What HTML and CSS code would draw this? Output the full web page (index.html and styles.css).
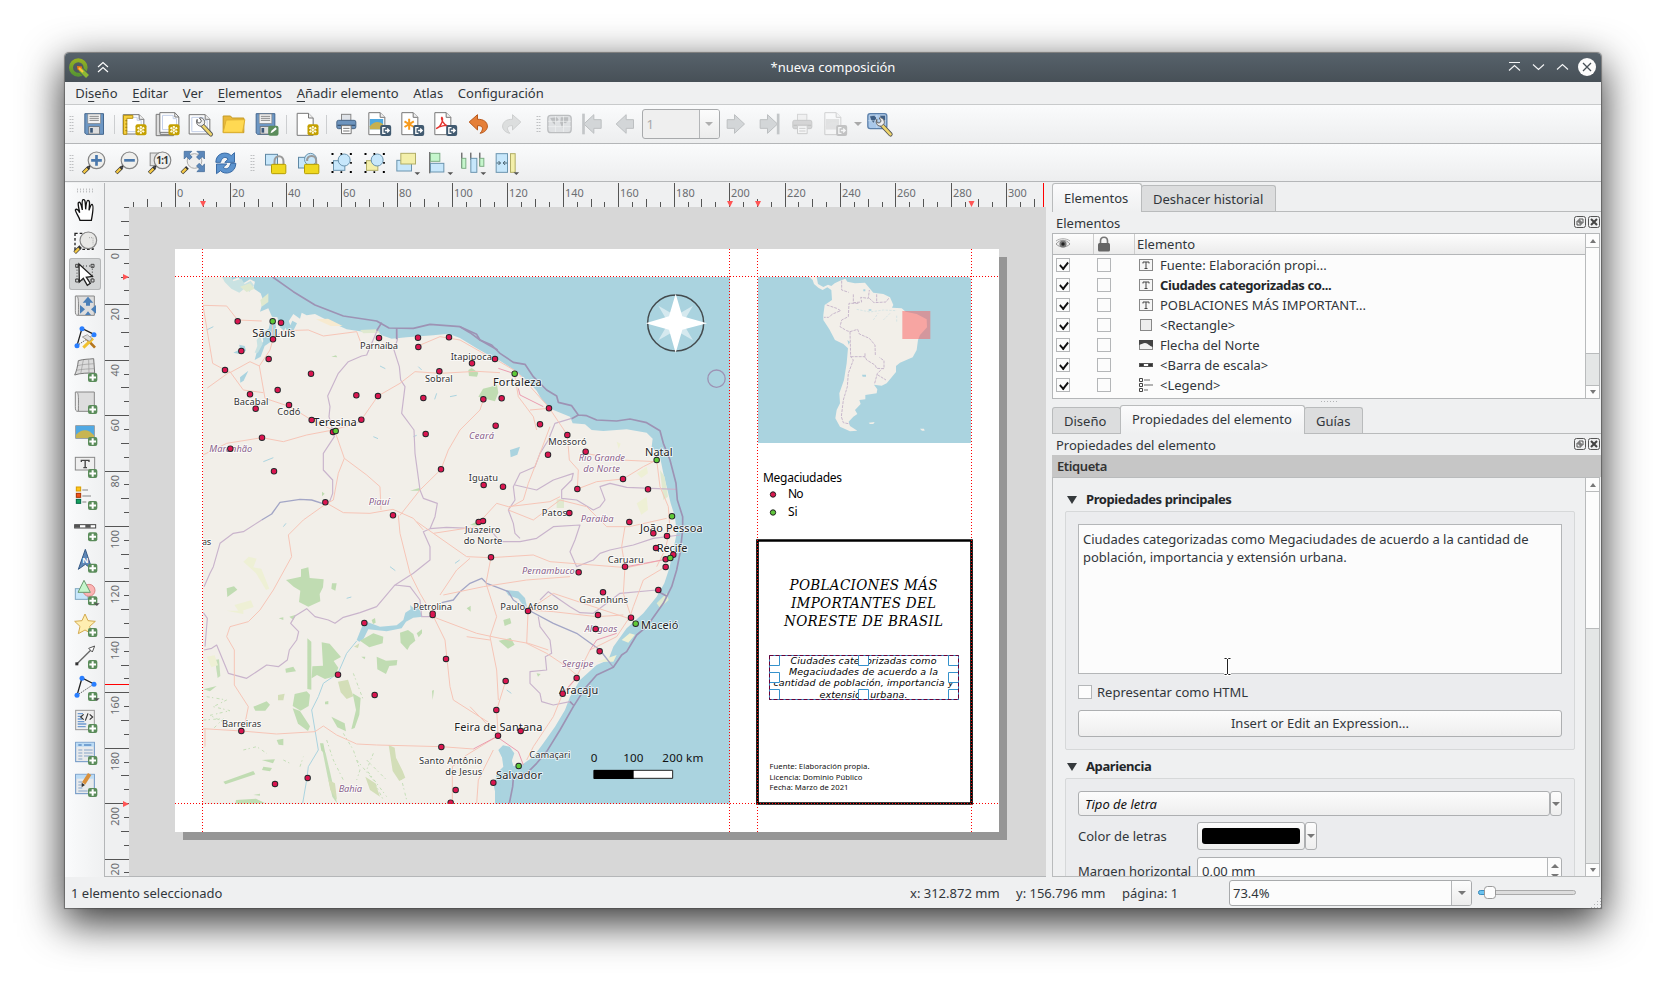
FILE: index.html
```html
<!DOCTYPE html>
<html lang="es">
<head>
<meta charset="utf-8">
<title>*nueva composición</title>
<link rel="stylesheet" href="styles.css">
</head>
<body>
<svg class="defs" width="0" height="0">
<defs>
<g id="b-new"><rect x="51" y="49" width="33" height="33" rx="6" fill="#c4a000"/><path d="M67 54v23M57 59l20 13M57 72l20-13" stroke="#fffbe0" stroke-width="6"/><circle cx="67" cy="65.500" r="5" fill="#fffbe0" stroke="#c4a000" stroke-width="2"/></g>
<g id="b-exp"><rect x="50" y="51" width="33" height="33" rx="6" fill="#415a70"/><path d="M66 59h-8v17h8M64 67.500h12m-5-6 6 6-6 6" fill="none" stroke="#fff" stroke-width="4"/></g>
<g id="b-add"><rect x="57" y="57" width="28" height="27" rx="6" fill="#5a8c5a"/><path d="M71 61v19M61 70.500h20" stroke="#fff" stroke-width="6"/></g>
<g id="arr"><path d="M75 76h17l-8.500 8z" fill="#555"/></g>
<g id="page"><path d="M20 16h34l14 14v52H20z" fill="#fff" stroke="#777" stroke-width="3"/><path d="M54 16v14h14" fill="#eee" stroke="#777" stroke-width="3"/></g>
<g id="wpage"><path d="M14 20h48l14 14v44H14z" fill="#fff" stroke="#777" stroke-width="3"/><path d="M62 20v14h14" fill="#eee" stroke="#777" stroke-width="3"/><path d="M22 28h34v9h12v34H22z" fill="#fff" stroke="#c3cfe8" stroke-width="3"/></g>
<g id="wrench"><path d="m50 48 27 29" stroke="#555" stroke-width="13" stroke-linecap="round"/><path d="m51 49 26 28" stroke="#edd46c" stroke-width="8" stroke-linecap="round"/><path d="M36 32c-6 14 4 22 14 20l8-7c3-10-6-20-15-17l6 9-5 6-8-1z" fill="#eee" stroke="#666" stroke-width="3"/></g>
<g id="floppy"><path d="M19 17h56v62H23l-4-4z" fill="#6d97c4" stroke="#45688f" stroke-width="3"/><rect x="28" y="18" width="38" height="28" fill="#f3f3f3" stroke="#888" stroke-width="2"/><path d="M33 25h28M33 31h28M33 37h28" stroke="#888" stroke-width="3"/><rect x="31" y="56" width="32" height="22" fill="#ddd" stroke="#666" stroke-width="2"/><rect x="35" y="60" width="8" height="14" fill="#3c5878"/></g>
<g id="glass"><path d="M17 78 34 61" stroke="#333" stroke-width="11"/><path d="m18 77 12-12" stroke="#f3c846" stroke-width="7"/><path d="m34 61 8-9" stroke="#222" stroke-width="7"/><circle cx="57" cy="40" r="25" fill="#efefed" stroke="#858585" stroke-width="3.500"/></g>
<g id="printer"><rect x="33" y="19" width="28" height="20" fill="#dfe3e8" stroke="#888" stroke-width="3"/><rect x="19" y="37" width="57" height="25" rx="5" fill="#6d94be" stroke="#496788" stroke-width="3"/><path d="M21 52h53" stroke="#3c5878" stroke-width="4"/><path d="M33 53h29v24H33z" fill="#fff" stroke="#777" stroke-width="3"/><path d="M38 61h19M38 69h19" stroke="#777" stroke-width="3"/></g>
<g id="corners" fill="#000"><path d="M18 18h6v6h-6zM45 18h5v5h-5zM73 18h6v6h-6zM18 45h5v5h-5zM18 72h6v6h-6zM45 73h5v5h-5zM73 72h6v6h-6zM74 45h5v5h-5z"/></g>
<g id="back"><path d="M18 48 48 20v15h22v26H48v15z" fill="#d3d6d8" stroke="#bcbfc1" stroke-width="3"/></g>
<g id="scroll"><path d="M22 18h54v58H28z" fill="#ddd" stroke="#888" stroke-width="3"/><path d="M19 18c10 0 10 6 9 58-8 1-9-4-9-14z" fill="#eee" stroke="#888" stroke-width="3"/></g>
<g id="tri"><path d="M24 76 39 24 75 42" fill="none" stroke="#222" stroke-width="4"/><path d="m24 76 51-34" stroke="#222" stroke-width="3" stroke-dasharray="3 4"/><circle cx="24" cy="76" r="7.500" fill="#2a7fff"/><circle cx="39" cy="25" r="7.500" fill="#2a7fff"/><circle cx="75" cy="43" r="7.500" fill="#2a7fff"/></g>
<g id="dockbtns"><g fill="none" stroke="#555"><rect x=".5" y=".5" width="11" height="11" rx="2"/><path d="M5 3h4v4H5zM3 5h4v4H3z"/><rect x="14.500" y=".5" width="11" height="11" rx="2"/></g><path d="m17 3 6 6m0-6-6 6" stroke="#444" stroke-width="2"/></g>
<g id="ti"><rect x=".5" y="1.500" width="13" height="11" fill="#f6f6f6" stroke="#888"/><path d="M4 5.500V4h6v1.500M7 4v6M5.500 10.500h3" fill="none" stroke="#444"/></g>
</defs>
</svg>

<div class="window">
  <header class="titlebar">
    <svg class="logo" viewBox="0 0 20 20"><defs><linearGradient id="q" x1="0" x2="0" y1="0" y2="1"><stop offset="0" stop-color="#93b023"/><stop offset="1" stop-color="#589632"/></linearGradient></defs><circle cx="9.300" cy="9.500" r="7.300" fill="none" stroke="url(#q)" stroke-width="4"/><path d="m11.500 11.500 7 7" stroke="#4b5761" stroke-width="6"/><path d="m11 11 7.500 7.500" stroke="#8fb833" stroke-width="4"/><path d="m8 8 5 .5-.5 5-4-2z" fill="#ee7913"/><path d="m10 10 4 4" stroke="#f8c83c" stroke-width="2"/></svg>
    <svg class="shade" viewBox="0 0 12 12"><path d="M1 6l5-4.500L11 6M1 11l5-4.500L11 11" fill="none" stroke="#fff" stroke-width="1.100"/></svg>
    <span class="caption">*nueva composición</span>
    <svg class="winbtns" viewBox="0 0 90 20"><g fill="none" stroke="#f4f5f6" stroke-width="1.100"><path d="M1 5.500h11M1 13.500l5.500-5 5.500 5M25 7.500l5.500 5 5.500-5M49 12.500l5.500-5 5.500 5"/></g><circle cx="79" cy="10" r="9" fill="#fcfcfc"/><path d="m75 6 8 8m0-8-8 8" stroke="#475057" stroke-width="1.300"/></svg>
  </header>

  <nav class="menu"><span>Di<u>s</u>eño</span><span><u>E</u>ditar</span><span><u>V</u>er</span><span><u>E</u>lementos</span><span><u>A</u>ñadir elemento</span><span>Atlas</span><span>Configuración</span></nav>

  <div class="toolbar bar1">
    <i class="grip"></i>
    <svg viewBox="0 0 96 96"><use href="#floppy"/></svg><i class="sep"></i>
    <svg viewBox="0 0 96 96"><use href="#wpage"/><path d="M15 22h28v9H25v48H15z" fill="#f6cf3f" stroke="#b7920f" stroke-width="3"/><path d="M20 38h6M20 48h6M20 58h6M20 68h6" stroke="#8a6c00" stroke-width="2"/><use href="#b-new"/></svg>
    <svg viewBox="0 0 96 96"><path d="M14 19h12v60h40v4H14z" fill="#ddd" stroke="#777" stroke-width="3"/><path d="M25 14h45l12 13v46H25z" fill="#fff" stroke="#777" stroke-width="3"/><path d="M33 22h32v10h10v33H33z" fill="none" stroke="#c3cfe8" stroke-width="3"/><path d="M70 14v13h12" fill="none" stroke="#777" stroke-width="3"/><use href="#b-new"/></svg>
    <svg viewBox="0 0 96 96"><use href="#wpage"/><use href="#wrench" x="2" y="2"/></svg>
    <svg viewBox="0 0 96 96"><path d="M17 24h22l5 6h35v44H17z" fill="#e9b83a" stroke="#c49a25" stroke-width="3"/><path d="m26 36 56-1-7 38H17z" fill="#ffd952" stroke="#dfb233" stroke-width="3"/></svg>
    <svg viewBox="0 0 96 96"><use href="#floppy" x="-2"/><rect x="53" y="53" width="31" height="30" rx="6" fill="#5a8c5a"/><path d="m60 76 3-8 12-10 4 5-12 10z" fill="#fff"/></svg><i class="sep"></i>
    <svg viewBox="0 0 96 96"><use href="#page"/><use href="#b-new"/></svg><i class="sep"></i>
    <svg viewBox="0 0 96 96"><use href="#printer"/></svg>
    <svg viewBox="0 0 96 96"><use href="#page" x="-4" y="-2"/><rect x="19" y="33" width="40" height="31" fill="#4ea8e0"/><path d="M19 55c14-16 26-16 40-6v15H19z" fill="#c5b050"/><use href="#b-exp"/></svg>
    <svg viewBox="0 0 96 96"><use href="#page" x="-4" y="-2"/><path d="M38 32v33M24 40l28 17M24 57l28-17" stroke="#f79b1d" stroke-width="6"/><use href="#b-exp"/></svg>
    <svg viewBox="0 0 96 96"><use href="#page" x="-4" y="-2"/><path d="M20 62c18-8 22-30 17-34-5 2 8 28 20 26-8-4-26 0-37 8z" fill="none" stroke="#e3342f" stroke-width="4"/><use href="#b-exp"/></svg>
    <svg viewBox="0 0 96 96"><path d="M20 42 45 20v14c36-2 40 36 8 42 12-14 8-24-8-23v13z" fill="#e57f38" stroke="#b9581b" stroke-width="3"/></svg>
    <svg viewBox="0 0 96 96" opacity=".75"><path d="M76 42 51 20v14c-36-2-40 36-8 42-12-14-8-24 8-23v13z" fill="#d5d7d7" stroke="#c0c2c2" stroke-width="3"/></svg>
    <i class="grip g2"></i>
    <svg viewBox="0 0 96 96"><rect x="13" y="22" width="70" height="52" rx="9" fill="#dfe1e3" stroke="#bcbec0" stroke-width="4"/><path d="m20 30 20-2 6 8-10 6 2 12-10-10zM52 28h22v12l-8 6-6-2-4 16-6-16z" fill="#bcbec0"/><path d="M14 40h68M14 56h68M36 24v48M60 24v48" stroke="#f0f1f2" stroke-width="2"/></svg>
    <svg viewBox="0 0 96 96"><use href="#back" x="4"/><path d="M21 17v62" stroke="#c3c6c8" stroke-width="8"/></svg>
    <svg viewBox="0 0 96 96"><use href="#back" x="2"/></svg>
    <div class="combo pagebox"><span>1</span><b></b></div>
    <svg viewBox="0 0 96 96"><use href="#back" transform="matrix(-1 0 0 1 90 0)"/></svg>
    <svg viewBox="0 0 96 96"><use href="#back" transform="matrix(-1 0 0 1 90 0)"/><path d="M74 17v62" stroke="#c3c6c8" stroke-width="8"/></svg>
    <svg viewBox="0 0 96 96" class="off"><use href="#printer"/></svg>
    <svg viewBox="0 0 96 96" class="off"><use href="#page" x="-4" y="-2"/><rect x="19" y="33" width="40" height="31" fill="#9bc"/><path d="M19 55c14-16 26-16 40-6v15H19z" fill="#bbb"/><use href="#b-exp"/></svg>
    <i class="dd"></i>
    <svg viewBox="0 0 96 96"><rect x="13" y="17" width="57" height="45" rx="7" fill="#a9c8ea" stroke="#5c80aa" stroke-width="4"/><path d="m18 24 14-2 8 8-10 16-8-10zM48 22h18v16l-10 4zM40 20v40M14 38h54" fill="#3f5f85" stroke="#dbe8f6" stroke-width="1.500"/><use href="#wrench" x="4" y="2"/></svg>
  </div>

  <div class="toolbar bar2">
    <i class="grip"></i>
    <svg viewBox="0 0 96 96"><use href="#glass"/><path d="M57 24v32M41 40h32" stroke="#4a78ac" stroke-width="8"/></svg>
    <svg viewBox="0 0 96 96"><use href="#glass"/><path d="M41 40h32" stroke="#4a78ac" stroke-width="8"/></svg>
    <svg viewBox="0 0 96 96"><rect x="20" y="18" width="28" height="38" fill="#e4e4e4" stroke="#888" stroke-width="3"/><use href="#glass"/><text x="56" y="51" class="one">1:1</text></svg>
    <svg viewBox="0 0 96 96"><path d="M16 78 33 61" stroke="#333" stroke-width="11"/><path d="m17 77 12-12" stroke="#f3c846" stroke-width="7"/><circle cx="54" cy="42" r="22" fill="#eee" stroke="#aaa" stroke-width="3"/><g fill="#5b87ba" stroke="#3d6593" stroke-width="2"><path d="M23 13h23l-8 8 9 9-8 8-9-9-7 7zM84 13H61l8 8-9 9 8 8 9-9 7 7zM84 74H61l8-8-9-9 8-8 9 9 7-7z"/></g></svg>
    <svg viewBox="0 0 96 96"><path d="M19 46c0-30 34-34 46-20l10-9v29H46l10-10c-9-9-19-5-23 10z" fill="#5c93ce" stroke="#3a6ba5" stroke-width="3"/><path d="M79 49c0 30-34 36-46 22l-12 9V51h31L41 61c9 9 19 3 23-12z" fill="#5c93ce" stroke="#3a6ba5" stroke-width="3"/></svg>
    <i class="grip g3"></i>
    <svg viewBox="0 0 96 96"><rect x="18" y="22" width="36" height="32" fill="#c7e7fb" stroke="#5f88a4" stroke-width="3"/><path d="M45 56V44c0-22 27-22 27 0v12" fill="none" stroke="#9a9a9a" stroke-width="6"/><rect x="36" y="52" width="43" height="28" rx="3" fill="#efd81f" stroke="#b59d00" stroke-width="3"/></svg>
    <svg viewBox="0 0 96 96"><rect x="18" y="31" width="36" height="32" fill="#c7e7fb" stroke="#5f88a4" stroke-width="3"/><circle cx="54" cy="37" r="18" fill="#c7e7fb" stroke="#6b94ae" stroke-width="3"/><path d="M44 42c-2-20 26-20 27-2v12" fill="none" stroke="#9a9a9a" stroke-width="6"/><rect x="36" y="52" width="43" height="28" rx="3" fill="#efd81f" stroke="#b59d00" stroke-width="3"/></svg>
    <svg viewBox="0 0 96 96"><rect x="24" y="41" width="34" height="29" fill="#c7e7fb" stroke="#6b94ae" stroke-width="3"/><circle cx="56" cy="39" r="18" fill="#c7e7fb" stroke="#6b94ae" stroke-width="3"/><use href="#corners"/></svg>
    <svg viewBox="0 0 96 96"><rect x="24" y="41" width="34" height="29" fill="#f3efaa" stroke="#b1ad66" stroke-width="3"/><circle cx="56" cy="39" r="18" fill="#c7e7fb" stroke="#6b94ae" stroke-width="3"/><use href="#corners"/></svg>
    <svg viewBox="0 0 96 96"><rect x="16" y="40" width="44" height="32" fill="#c7e7fb" stroke="#6b94ae" stroke-width="3"/><rect x="28" y="19" width="44" height="32" fill="#f3efaa" stroke="#b1ad66" stroke-width="3"/><use href="#arr" x="-6"/></svg>
    <svg viewBox="0 0 96 96"><path d="M16 15v64" stroke="#333" stroke-width="3"/><rect x="18" y="19" width="28" height="24" fill="#c5f6cc" stroke="#7fae86" stroke-width="3"/><rect x="18" y="49" width="40" height="26" fill="#c7e7fb" stroke="#6b94ae" stroke-width="3"/><use href="#arr" x="-6"/></svg>
    <svg viewBox="0 0 96 96"><path d="M13 17v46M40 17v22M67 17v40" stroke="#333" stroke-width="3"/><rect x="13" y="34" width="12" height="30" fill="#c5f6cc" stroke="#7fae86" stroke-width="3"/><rect x="40" y="34" width="18" height="42" fill="#c7e7fb" stroke="#6b94ae" stroke-width="3"/><rect x="67" y="34" width="12" height="24" fill="#c5f6cc" stroke="#7fae86" stroke-width="3"/><use href="#arr" x="-6"/></svg>
    <svg viewBox="0 0 96 96"><rect x="17" y="20" width="34" height="56" fill="#c7e7fb" stroke="#6b94ae" stroke-width="3"/><path d="M18 48h12m-6-6 6 6-6 6M50 48H38m6-6-6 6 6 6" fill="none" stroke="#46606f" stroke-width="3"/><rect x="60" y="20" width="14" height="56" fill="#f3efaa" stroke="#b1ad66" stroke-width="3"/><use href="#arr" x="-6"/></svg>
  </div>

  <main class="body">
    <aside class="tools">
      <i class="hgrip"></i>
      <svg viewBox="0 0 96 96"><path d="M33 79c-3-12-12-20-14-31 4-6 10 1 13 8-2-13-6-25-4-30 5-4 8 1 12 22-1-15-2-29 2-31 6-2 7 4 8 29 1-14 3-27 7-27 6 0 5 10 3 30 3-10 5-18 9-18 6 2 3 22-2 48z" fill="#fff" stroke="#111" stroke-width="4"/></svg>
      <svg viewBox="0 0 96 96"><rect x="18" y="22" width="54" height="48" fill="none" stroke="#222" stroke-width="4" stroke-dasharray="8 6"/><path d="M17 80 35 62" stroke="#333" stroke-width="11"/><path d="m18 79 12-12" stroke="#f3c846" stroke-width="7"/><circle cx="58" cy="43" r="25" fill="#e8e8e6" stroke="#858585" stroke-width="3.500"/><path d="M60 35h12v20" fill="none" stroke="#aaa" stroke-width="3" stroke-dasharray="3 3"/></svg>
      <svg class="on" viewBox="0 0 96 96"><rect x="24" y="24" width="46" height="42" fill="none" stroke="#222" stroke-width="2.500" stroke-dasharray="3 6"/><path d="M20 19h9v9h-9zM66 19h9v9h-9zM20 63h9v9h-9zM66 63h9v9h-9z" fill="none" stroke="#444" stroke-width="3"/><path d="m30 18 1 54 12-11 12 21 9-6-12-18 18-3z" fill="#fff" stroke="#222" stroke-width="4"/></svg>
      <svg viewBox="0 0 96 96"><use href="#scroll"/><g fill="#4a7fb8"><path d="M57 20 73 38H63v9H51v-9H41zM33 45l15 13-15 13zM81 45 66 58l15 13zM48 75h18L57 64z"/></g></svg>
      <svg viewBox="0 0 96 96"><use href="#tri" y="-5"/><path d="m46 43 32 34" stroke="#b5761d" stroke-width="8"/><path d="M43 77 72 49" stroke="#f1c232" stroke-width="9"/><path d="M40 45 55 38l14 12-8 8z" fill="#ddd" stroke="#888" stroke-width="2"/></svg>
      <svg viewBox="0 0 96 96"><path d="M28 20c16-5 30-4 46-6l3 43c-20 0-44 0-60 6 5-10 9-26 11-43z" fill="#dcdcdc" stroke="#777" stroke-width="3"/><path d="M26 35c18-5 32-4 50-6M22 49c18-4 36-4 54-5M43 18l-8 42M59 17l1 40" stroke="#999" stroke-width="2" fill="none"/><use href="#b-add"/></svg>
      <svg viewBox="0 0 96 96"><use href="#scroll"/><use href="#b-add"/></svg>
      <svg viewBox="0 0 96 96"><rect x="20" y="23" width="56" height="38" fill="#51a9e3" stroke="#888" stroke-width="2"/><path d="M21 50c20-20 38-16 54 2v8H21z" fill="#c8b552"/><use href="#b-add"/></svg>
      <svg viewBox="0 0 96 96"><rect x="19" y="22" width="58" height="38" fill="#efefef" stroke="#888" stroke-width="3"/><path d="M37 36v-5h23v5M48.500 31v21M43 53h11" fill="none" stroke="#444" stroke-width="4"/><use href="#b-add"/></svg>
      <svg viewBox="0 0 96 96"><g stroke-width="3"><rect x="22" y="15" width="13" height="12" fill="#ffc61a" stroke="#d89b00"/><rect x="22" y="34" width="13" height="12" fill="#f1521b" stroke="#a83200"/><rect x="22" y="52" width="13" height="12" fill="#16a05d" stroke="#064"/></g><path d="M40 24h17M40 42h26M40 60h12" stroke="#aaa" stroke-width="4"/><use href="#b-add"/></svg>
      <svg viewBox="0 0 96 96"><rect x="17" y="32" width="63" height="10" fill="#fff" stroke="#444" stroke-width="3"/><path d="M17 37h16M49 37h16" stroke="#555" stroke-width="8"/><use href="#b-add" y="-2"/></svg>
      <svg viewBox="0 0 96 96"><path d="M49 10 69 70 49 55 28 70z" fill="#5f88b8" stroke="#365a85" stroke-width="3"/><text class="nn" x="49" y="50">N</text><use href="#b-add" y="-4"/></svg>
      <svg viewBox="0 0 96 96"><rect x="19" y="32" width="38" height="32" fill="#c7e7fb" stroke="#7fa7c0" stroke-width="3"/><circle cx="60" cy="37" r="18" fill="#fbb4b4" stroke="#d98686" stroke-width="3"/><path d="m45 7 19 36H27z" fill="#c5f6cc" stroke="#6a9a70" stroke-width="3"/><use href="#b-add" y="-2"/><use href="#arr"/></svg>
      <svg viewBox="0 0 96 96"><path d="m48 12 9 20 22 2-17 15 5 22-19-11-20 11 5-22-16-15 22-2z" fill="#ffeeb0" stroke="#d3aa50" stroke-width="3"/><use href="#b-add" y="-3"/></svg>
      <svg viewBox="0 0 96 96"><path d="M24 65 68 22" stroke="#666" stroke-width="4"/><path d="m77 12-18 7 11 11z" fill="#fff" stroke="#555" stroke-width="3"/><path d="M19 61h9v9h-9z" fill="#333"/><use href="#b-add" y="-3"/></svg>
      <svg viewBox="0 0 96 96"><use href="#tri" y="-12"/><use href="#b-add" y="-3"/><use href="#arr" y="-3"/></svg>
      <svg viewBox="0 0 96 96"><rect x="20" y="13" width="56" height="58" fill="#efefef" stroke="#999" stroke-width="3"/><path d="M26 23h16M26 31h12M26 39h14M26 47h20M26 54h26M26 62h24" stroke="#6f9bd0" stroke-width="4"/><path d="m44 25-9 8 9 8M62 25l9 8-9 8M57 22l-8 22" fill="none" stroke="#333" stroke-width="3.500"/><use href="#b-add" y="-3"/></svg>
      <svg viewBox="0 0 96 96"><rect x="20" y="13" width="56" height="58" fill="#e8eaec" stroke="#6b94c4" stroke-width="3"/><path d="M21 20h54" stroke="#bcdcf5" stroke-width="12"/><path d="M28 21h10M45 21h22" stroke="#5c8fc8" stroke-width="4"/><path d="M28 36h12M45 36h26M28 45h12M45 45h26M28 54h12M45 54h26M28 63h12" stroke="#87a5c8" stroke-width="3"/><use href="#b-add" y="-3"/></svg>
      <svg viewBox="0 0 96 96"><rect x="20" y="13" width="56" height="58" fill="#e8eaec" stroke="#6b94c4" stroke-width="3"/><path d="M21 20h54" stroke="#bcdcf5" stroke-width="12"/><path d="M28 36h12M28 45h12M28 54h12M28 63h28" stroke="#87a5c8" stroke-width="3"/><path d="M62 12 44 40" stroke="#d9903b" stroke-width="12"/><path d="m38 38 10 7-10 7z" fill="#333"/><use href="#b-add" y="-3"/></svg>
    </aside>

    <section class="view">
      <svg class="hruler" viewBox="105 183 941 24"><path id="hticks"/><g id="hlabels"></g><path class="mark" d="M200 201h6l-3 6zM727 201h6l-3 6zM755 201h6l-3 6zM968.500 201h6l-3 6z"/><path class="cur" d="M1043.500 183v24"/></svg>
      <div class="viewrow">
        <svg class="vruler" viewBox="105 207 24 669"><path id="vticks"/><g id="vlabels"></g><path class="mark" d="M123 274v6l6-3zM123 801v6l6-3z"/><path class="cur" d="M105 684.500h24"/></svg>
        <svg class="canvas" viewBox="129 207 917 669">
          <defs>
            <clipPath id="cm"><rect x="9" y="111" width="1581" height="1580"/></clipPath>
            <clipPath id="ci"><rect x="54" y="111" width="639" height="498"/></clipPath>
          </defs>
          <path fill="#969696" d="M183 257h824v583H183z"/><path fill="#fff" d="M175 249h824v583H175z"/>
          <g transform="translate(200 240) scale(.33333)"><g clip-path="url(#cm)">
            <path fill="#aad3df" d="M0 100h1600v1600H0z"/>
            <path fill="#f2efe9" d="M0 100L80 105 92 122 115 112 130 130 150 118 165 125 160 145 182 160 190 182 180 215 205 205 216 230 232 232 240 262 252 272 262 250 280 222 300 236 305 218 320 226 345 222 400 250 440 268 500 277 530 274 545 286 575 296 620 292 700 286 745 281 780 294 830 325 860 342 900 362 950 395 990 430 1010 452 1026 480 1055 508 1110 530 1118 550 1155 553 1175 570 1210 573 1280 568 1340 578 1358 596 1355 620 1380 650 1390 700 1400 740 1412 790 1425 830 1430 880 1420 930 1408 985 1393 1030 1370 1070 1330 1120 1280 1165 1240 1220 1225 1260 1190 1275 1140 1320 1110 1370 1095 1410 1065 1460 1030 1510 1000 1550 965 1575 940 1578 932 1550 918 1520 905 1545 910 1580 890 1600 882 1640 895 1700H0z"/>
            <g fill="#aad3df"><path d="M212 240l14 8 4 26-10 26-26 18-12 32-18 10 8-30 18-26-4-24 20-14zM120 412l25-20-14 30-10 6zM100 338l20-10-2-14 16 4 4 14-20 10zM470 1200L490 1150 500 1145 540 1160 590 1156 610 1140 616 1118 632 1108 630 1095 645 1108 655 1102 668 1130 640 1133 618 1145 605 1165 560 1174 505 1168 490 1198 478 1205zM255 262l10-22 6 16 6-14 14 8-10 20-16 8zM905 1550l-10-20 14-14 20 4 14 20-10 30-14-8zM885 1640l16-6 0 60-16 0zM930 630l30-10-8 24-20 8zM915 1050l40 4 20 20 6 26-10-2-16-22-30-10z"/></g>
            <path fill="#c9e2e2" d="M60 100l30 4 10 20 24-8 10 16 18-10 10 14-14 20-10-14-20 16-24-12-20-20zM170 300l10-12 8 24-14 26-10 0 8-20z"/>
            <path fill="none" stroke="#aad3df" stroke-width="3" d="M470 1203L440 1240 414 1300 370 1330 355 1370 335 1410 345 1470 355 1530 325 1580 320 1620 308 1690M20 270l20-10M710 460l-6 18M750 470l20-4M520 590l14 6M190 665l30-12M250 860l8-10M570 980l16 12M920 1350l14 10M655 380l10 10M540 378l16 8M60 620l30 4M640 590l10-4M765 970l14-10M440 1075l14-4M1020 470l10-10"/>
            <g fill="#c0dcb2"><path d="M258 1020l45-10 0-22 22-6 4 32 42 4-2 24-10 20 2 22-36 16-28-14 4-34-20-12zM80 1045l22-6 10 10-30 22zM396 1030l14 0-4 22-12-6zM365 1207l24 4 34 40-22 12 14 20-10 26-30 8-24-12-16 10 2-36 32-2zM322 1195l12 10 0 144-12-2zM480 1202l40-22 30 10-2 20-40 12zM600 1178l24-8 16 12 6 20-16 14-8 14-20-22zM530 1250l28 12 34-2-2 16-22 2-10 24-26-14zM284 1362l36-8 10 10-4 34-24 14-24-14zM278 1405l22 8 30 46-6 14-30-22zM256 1286l24-6 8 14-30 4zM160 1400l40-16 10 10-14 18-30 0zM394 1430l40 20 4 24-26-12zM454 1468l14-58-10-50 24 14-4 50-14 40zM70 1625l90-32 6 10-90 30zM108 1680l60-4 28 14-90 4zM185 1560l40-2-6 12zM190 1580l26 4-6 10-24-4zM10 1348l40-10-20 16zM268 1130l20-6-8 16zM236 1135l14-3 0 8zM375 1385l10-2 0 10-10 0zM484 1250l12 0-2 8zM696 1352l6-2-4 30zM805 390l10-6 20 14-4 12-24-2zM835 470l14-24 24-6 18-6 4 24-10 26-30-8zM630 752l28-8 4 8zM810 855l24-12 0 14zM910 1140l20-6 4 16-20 8zM896 1202l36-8 12 20-20 12zM1010 1300l12 2-8 8zM800 1105l12-8 0 18zM230 1500l20-4 0 20-14-2zM360 1510l10 0 6 30-12-8zM515 1140l10-6 2 14-8 4zM650 1180l16-12 0 12-10 12zM366 755l8 6-8 8zM394 350l14-4 4 6z"/><path d="M365 1520l12 20 14 60 20 90-14-20-14-60zM45 1260l12-2 4 50-8 6zM160 1665l20-4 0 6z" opacity=".9"/></g>
            <path fill="none" stroke="#c5deb8" stroke-width="3" stroke-dasharray="9 7 4 10" d="M20 1370l60 10-40 20 50 12-60 14 40 20M10 1440l60-4-30 30M430 1480l30 50 20 60-10 30M470 1560l50 60 30 60M380 1500l20 60 30 60M500 1560l60 60M130 1530l40-10 30 20M300 1580l10-30M460 1300l30 80M600 1600l20 80M250 1560l20 10M520 1540l-20 50 60 80"/>
            <g fill="#d3deb8"><path d="M414 1325l30-6 16 50-20 8-18-20zM234 1365l20-4-4 20-16 0zM566 1515l18 8 4 30 20 40 8 20-18 10-20-30zM385 1620l20 10 6 50-20-30zM462 1220l16-10-4 14zM496 1610l30 20 14 40-30-20z"/></g>
            <g fill="#eef0d5"><path d="M130 965l16-15 24 6-10 26 24 4 24 60-10 4-30-50zM103 1095l50-14 8 20-44 14zM80 1112l50 0 0 10zM20 1250l24-4 10 30-20 6zM1250 605l12 6-6 16zM1310 700l30-20 4 20-20 14zM1310 790l30-20 4 40-20 14zM1190 1265l60-20-10 20zM1265 1200l24-20 16 4-20 24z"/></g>
            <path fill="#f7ead0" d="M348 238l36-2 44 22-36 0z"/><path fill="#dfe9cf" d="M205 160l-24 20 4 20 20-14zM120 140l30-10 14 16-24 10zM480 270l50-2 10 10-50 2zM1070 778h22v26h-22zM1370 1090l30-30 6 20-26 24zM1380 690l14 20 10 60-14 10z"/>
            <g fill="none" stroke="#c9b4cc" stroke-width="3.500" stroke-linejoin="round"><path d="M545 248L530 275 500 345 485 348 445 365 415 400 383 468 390 500 387 530 403 590 370 640 370 690 398 720 398 760 390 782 376 793M185 840L130 875 100 880 60 910 40 980 30 1000 12 1040M590 264L592 300 582 330 598 380 602 420 615 440 605 520 642 570 645 640 660 750 670 775 712 790 705 830 690 866 670 875 690 920 690 960 640 1000 585 1035 530 1100 480 1118 430 1132 405 1150 385 1140 345 1130 320 1106 285 1128 272 1150 296 1175 290 1200 268 1230 262 1260 235 1280 200 1275 140 1315 85 1300 50 1215 35 1225 12 1230M585 1035L630 1040 660 1080 665 1130 698 1130M10 1118L22 1135 15 1220M1115 535L1065 550 1045 600 1020 640 1005 680 960 700 940 740 945 780 925 810 940 850 945 880 960 895M945 735L1010 750 1060 720 1120 700 1115 720 1085 750 1085 775 1130 780 1180 810 1200 800 1215 780 1200 740 1230 730 1280 742 1430 748M690 866L740 862 830 866 880 880 900 905 960 905 1010 895 1060 860 1140 855 1125 900 1110 935 1130 980 1180 960 1200 940 1230 930 1300 915 1360 895 1440 885M1020 1080L1045 1055 1110 1100 1140 1118 1180 1120 1220 1090 1260 1060 1370 1050 1400 1070M1015 1130L1020 1160 1050 1200 1055 1240 1036 1250 1040 1290 990 1295 990 1330 1020 1360 1025 1385 1060 1395 1110 1385 1120 1395"/></g>
            <path fill="none" stroke="#a3a6c6" stroke-width="4" stroke-linejoin="round" d="M376 793L335 780 300 778 240 787 215 822 185 840M725 1088L760 1080 780 1055 810 1030 845 1015 860 1030 900 1045 925 1055 940 1080 985 1110 1060 1150 1130 1180 1200 1230 1240 1282"/>
            <g fill="none" stroke="#f6c5b7" stroke-width="3" stroke-linejoin="round"><path d="M9 196L80 198 113 240 185 243M9 196L38 370 75 390 90 398 150 365 178 378 210 330 219 298 217 250M22 444L90 395 130 450 190 458M178 378L195 475 270 500 335 540 399 570M219 298L250 272 325 270 370 288 470 275 485 315M9 645L80 610 186 593 250 605 320 585 399 570 470 550 484 539 534 468 600 430 645 395 720 400 830 394 900 398M654 318L720 290 780 300 885 360M407 580L433 655 415 700 400 780 376 793 310 840 265 885 275 950 220 1050 180 1110 145 1145 90 1160 80 1190 103 1230 103 1335 145 1400 135 1450M433 655L500 705 540 740 543 810M376 787L430 818 510 820 579 808 640 835 670 870M600 826L660 750 723 688 745 630 780 570 840 510 850 480M595 826L600 880 630 1000 660 1060 698 1125 735 1200 750 1340 760 1380 870 1450M9 1466L124 1473 230 1482 345 1475 370 1458 410 1485 470 1512 530 1515 724 1520 820 1527M15 1466V1520M757 1690L757 1580 800 1545 890 1490M698 1130L830 1180 900 1195 985 1210 1045 1230M650 845L700 880 800 950 873 953 1000 945 1050 965 1280 983 1397 958M700 880L830 860M720 1065L770 990 810 955M730 1065L850 1040 980 1020 1110 1010M873 952L858 1030 890 1130 870 1190 890 1290 895 1380M835 850L890 790 925 800 1050 785 1080 770M925 805L970 780 985 730 1020 640 1050 560M885 357L950 395 1045 500 1102 585 1108 660 1135 690 1132 747M944 405L955 470 1000 530 1010 570M990 510L1047 505M1157 640L1260 660 1370 665M1132 747L1190 725 1269 717 1330 680 1370 660 1380 740 1405 800 1410 870 1395 930 1370 980M925 810L1000 840 1080 780 1160 800 1220 860 1288 860 1400 835M1275 860L1265 920 1275 980 1270 1060 1290 1120M1397 980L1330 1020 1300 1100 1290 1130 1250 1190 1170 1230 1130 1310 1088 1361 1060 1430 1000 1520 980 1560M984 1110L1060 1115 1190 1130 1270 1125M984 1120L980 1210 1040 1240 1100 1280 1130 1305M985 1110L1060 1060 1150 1090 1300 1140M917 1323L890 1410 894 1480M810 1400L894 1487M830 1690L835 1620 880 1530M800 1190L870 1200"/></g>
            <path fill="none" stroke="#ea9cb0" stroke-width="3" d="M820 1527L890 1490 955 1535 970 1575M1170 1230L1190 1200 1250 1180M1088 1361L1130 1314M955 445L960 465 1030 500M1280 980L1397 958M895 385L940 400"/>
            <g fill="none" stroke="#9d93b4" stroke-width="5" stroke-linejoin="round"><path d="M218 111L280 155 345 195 430 228 530 243 567 264 640 265 690 253 780 260 830 283 840 300 893 330"/><path d="M545 248L530 272M590 264v34M780 260L810 278 840 300 875 315 900 340 940 367 975 373 1000 410 1040 450 1070 468 1075 487 1115 497 1135 525 1160 527 1190 540 1250 543 1290 537 1340 548 1380 572 1390 610 1410 660 1428 730 1432 780 1448 830 1448 870 1440 940 1430 990 1415 1040 1390 1090 1340 1160 1310 1185 1280 1235 1265 1245 1240 1282 1190 1305 1155 1345 1120 1400 1080 1470 1040 1535 1010 1570 980 1600 940 1615 938 1640 928 1690M1120 1395L1110 1385M1400 1068L1365 1050M1135 525L1115 536"/><circle cx="1549.500" cy="416" r="26" stroke-width="4"/></g>
            <g class="big"><text x="157" y="290" textLength="129">São Luís</text><text x="340" y="557" textLength="130">Teresina</text><text x="879" y="438" textLength="146">Fortaleza</text><text x="1335" y="649" textLength="83">Natal</text><text x="1320" y="875" textLength="188">João Pessoa</text><text x="1370" y="937" textLength="92">Recife</text><text x="1323" y="1167" textLength="112">Maceió</text><text x="1077" y="1362" textLength="118">Aracaju</text><text x="763" y="1472" textLength="264">Feira de Santana</text><text x="888" y="1616" textLength="138">Salvador</text></g>
            <g class="mid"><text x="480" y="328" textLength="114">Parnaíba</text><text x="752" y="360" textLength="124">Itapipoca</text><text x="675" y="427" textLength="83">Sobral</text><text x="101" y="496" textLength="104">Bacabal</text><text x="232" y="524" textLength="69">Codó</text><text x="806" y="723" textLength="88">Iguatu</text><text x="1045" y="615" textLength="115">Mossoró</text><text x="1025" y="828" textLength="76">Patos</text><text x="795" y="879" textLength="106">Juazeiro</text><text x="791" y="913" textLength="116">do Norte</text><text x="1223" y="969" textLength="108">Caruaru</text><text x="1138" y="1090" textLength="146">Garanhuns</text><text x="901" y="1111" textLength="174">Paulo Afonso</text><text x="640" y="1110" textLength="116">Petrolina</text><text x="66" y="1460" textLength="118">Barreiras</text><text x="657" y="1572" textLength="190">Santo Antônio</text><text x="736" y="1605" textLength="111">de Jesus</text><text x="988" y="1553" textLength="123">Camaçari</text><text x="6" y="915" textLength="28">as</text></g>
            <g class="state"><text x="28" y="637" textLength="129">Maranhão</text><text x="506" y="796" textLength="62">Piauí</text><text x="807" y="598" textLength="75">Ceará</text><text x="1136" y="662" textLength="139">Rio Grande</text><text x="1150" y="695" textLength="110">do Norte</text><text x="1142" y="847" textLength="99">Paraíba</text><text x="966" y="1003" textLength="158">Pernambuco</text><text x="1154" y="1176" textLength="98">Alagoas</text><text x="1086" y="1280" textLength="94">Sergipe</text><text x="416" y="1657" textLength="70">Bahia</text></g>
            <path id="no-out" class="pt out"/><path id="no-in" class="pt red"/><path id="si-out" class="pt out"/><path id="si-in" class="pt green"/>
            <g transform="translate(1427 249)"><circle r="84" fill="none" stroke="#444b4e" stroke-width="4.500"/><path fill="#d5e9ef" d="M-52-52-14-30 14-30 52-52 30-14 30 14 52 52 14 30-14 30-52 52-30 14-30-14z"/><path fill="#fff" d="M0-88 20-20 94 1 20 20 0 90-20 20-90 1-20-20z"/></g>
            <g class="km"><text x="1172" y="1566">0</text><text x="1270" y="1566" textLength="60">100</text><text x="1387" y="1566" textLength="123">200 km</text></g>
            <path d="M1182 1591h236v24h-236z" fill="#fff" stroke="#222" stroke-width="3"/><path d="M1181 1590h120v27h-120z"/>
          </g></g>
          <g transform="translate(740 240) scale(.33333)"><g clip-path="url(#ci)">
            <path fill="#aad3df" d="M54 111h640v499H54z"/>
            <path fill="#f2efe9" d="M208 111L230 111 234 132 250 141 264 134 274 138 284 130 300 122 306 120 316 116 322 125 345 130 375 128 385 140 400 158 430 162 450 172 460 195 456 203 485 205 497 215 530 222 560 238 561 262 540 285 534 300 530 330 518 352 480 368 468 378 468 396 455 412 440 430 425 437 402 434 412 448 410 460 376 465 376 478 358 480 362 492 345 510 352 522 340 530 326 545 330 558 352 572 330 574 300 560 286 535 290 510 300 490 298 460 312 420 320 370 324 325 310 312 285 300 268 268 250 240 250 225 254 195 276 180 274 150 262 142 248 150 236 144 222 132 218 120zM386 548l18-2-4 6-10 0zM540 566l12 0 2 6-8 0zM686 111h8v8z"/>
            <g fill="none" stroke="#c8b8cc" stroke-width="3" stroke-dasharray="9 3"><path d="M305 122L305 150 326 157M340 163L340 188 365 186 362 172 385 175 388 150M388 175L402 188 438 186 446 175M410 163v22M260 195L290 205 302 212 278 222 266 232 252 232M355 190L327 190 325 230 305 240 300 260 320 272 330 275 353 268 358 282 388 295 405 315 406 345M330 275L332 350 340 360 325 400 322 440 310 480 304 530 310 548 330 552M332 350L375 350 380 360 405 375 410 385 432 386 432 362 418 352M375 340v14M404 430L412 400 425 388M412 404L438 420"/></g>
            <path fill="none" stroke="#c9dfe2" stroke-width="2" stroke-dasharray="7 4" d="M350 208l40 8 40-6 40 2M400 240l14-20M430 240l20-20M470 245v-20"/>
            <path fill="#aad3df" d="M322 300l8 6-4 8zM366 404h12v6h-10zM370 148h6v6h-6zM386 208h8v4h-8z"/>
            <path d="M487 213h84v84h-84z" fill="#fb5b5b" fill-opacity=".5"/>
          </g></g>
          <g class="legend"><text x="763" y="481.500" textLength="79">Megaciudades</text><text x="788" y="498" textLength="15.500">No</text><text x="788" y="516">Si</text></g>
          <circle cx="773" cy="494.500" r="2.700" fill="#d9194f" stroke="#222"/><circle cx="773" cy="512.500" r="2.700" fill="#60c63c" stroke="#222"/>
          <path d="M757.500 540.500h214v263h-214z" fill="#fff" stroke="#000" stroke-width="2.700"/>
          <g class="ttl"><text x="863.500" y="590" textLength="148">POBLACIONES MÁS</text><text x="863.500" y="608" textLength="145">IMPORTANTES DEL</text><text x="863.500" y="626" textLength="159">NORESTE DE BRASIL</text></g>
          <g class="sub"><text x="863.500" y="664" textLength="146">Ciudades categorizadas como</text><text x="863.500" y="675" textLength="149">Megaciudades de acuerdo a la</text><text x="863.500" y="686" textLength="180">cantidad de población, importancia y</text><text x="863.500" y="698" textLength="88">extensión urbana.</text></g>
          <g class="src"><text x="769.500" y="769" textLength="100">Fuente: Elaboración propia.</text><text x="769.500" y="779.500" textLength="93">Licencia: Dominio Público</text><text x="769.500" y="790" textLength="79">Fecha: Marzo de 2021</text></g>
          <path class="handles" d="M769.500 655.500h10v10h-10zM858.500 655.500h10v10h-10zM948.500 655.500h10v10h-10zM769.500 672.500h10v10h-10zM948.500 672.500h10v10h-10zM769.500 689.500h10v10h-10zM858.500 689.500h10v10h-10zM948.500 689.500h10v10h-10z"/>
          <rect x="769.500" y="655.500" width="189" height="44" fill="none" stroke="#3493c8"/><rect x="769.500" y="655.500" width="189" height="44" fill="none" stroke="#6b0038" stroke-dasharray="4 2"/>
          <path class="guides" d="M202.500 249v583M729.500 249v583M757.500 249v583M971.500 249v583M175 276.500h824M175 803.500h824"/>
        </svg>
      </div>
    </section>

    <aside class="dock">
      <div class="tabs t1"><span class="tab on">Elementos</span><span class="tab">Deshacer historial</span></div>
      <div class="docktitle"><span>Elementos</span><svg viewBox="0 0 26 12"><use href="#dockbtns"/></svg></div>
      <div class="list">
        <div class="rows">
          <div class="row head"><span class="c1"><svg viewBox="0 0 16 12"><path d="M1 6c4-5 10-5 14 0-4 4-10 4-14 0z" fill="#eee" stroke="#999"/><circle cx="8" cy="6" r="3.600" fill="#777"/><circle cx="8" cy="6" r="1.700" fill="#222"/><path d="M1 3c4-3 10-3 14 0" fill="none" stroke="#aaa"/></svg></span><span class="c2"><svg viewBox="0 0 12 16"><path d="M2.500 8V5c0-5 7-5 7 0v3" fill="none" stroke="#777" stroke-width="1.600"/><rect x="0" y="7" width="12" height="8.500" rx="1.500" fill="#666"/></svg></span><span class="c3">Elemento</span></div>
          <div class="row"><i class="ck on"></i><i class="ck"></i><svg viewBox="0 0 14 14"><use href="#ti"/></svg><span>Fuente: Elaboración propi...</span></div>
          <div class="row"><i class="ck on"></i><i class="ck"></i><svg viewBox="0 0 14 14"><use href="#ti"/></svg><span class="bold">Ciudades categorizadas co...</span></div>
          <div class="row"><i class="ck on"></i><i class="ck"></i><svg viewBox="0 0 14 14"><use href="#ti"/></svg><span>POBLACIONES MÁS IMPORTANT...</span></div>
          <div class="row"><i class="ck on"></i><i class="ck"></i><svg viewBox="0 0 14 14"><rect x="1.500" y="1.500" width="11" height="11" fill="#eee" stroke="#888"/></svg><span>&lt;Rectangle&gt;</span></div>
          <div class="row"><i class="ck on"></i><i class="ck"></i><svg viewBox="0 0 14 14"><rect x=".5" y="2.500" width="13" height="9" fill="#f2f2f2" stroke="#888"/><path d="M0 2h14v7c-4-1-5-4-8-4-2 0-3 1-6 2z" fill="#444"/></svg><span>Flecha del Norte</span></div>
          <div class="row"><i class="ck on"></i><i class="ck"></i><svg viewBox="0 0 14 14"><path d="M0 5h14v4H0z" fill="#555"/><path d="M5 6h4v2H5z" fill="#fff"/><path d="M1 6h3v2H1zM10 6h3v2h-3z" fill="#333"/></svg><span>&lt;Barra de escala&gt;</span></div>
          <div class="row"><i class="ck on"></i><i class="ck"></i><svg viewBox="0 0 14 14"><path d="M.5.500h3v3h-3zM.5 5.500h3v3h-3zM.5 10.500h3v3h-3z" fill="none" stroke="#444"/><path d="M5 2h6M5 7h9M5 12h4" stroke="#999" stroke-width="1.400"/></svg><span>&lt;Legend&gt;</span></div>
        </div>
        <div class="scroll"><i class="up"></i><b class="h1"></b><i class="down"></i></div>
      </div>
      <div class="split"></div>
      <div class="tabs t2"><span class="tab w1">Diseño</span><span class="tab on w2">Propiedades del elemento</span><span class="tab w3">Guías</span></div>
      <div class="docktitle"><span>Propiedades del elemento</span><svg viewBox="0 0 26 12"><use href="#dockbtns"/></svg></div>
      <div class="label">Etiqueta</div>
      <div class="props">
        <div class="form">
          <div class="gt bold">Propiedades principales</div>
          <div class="group g-main">
            <div class="textarea">Ciudades categorizadas como Megaciudades de acuerdo a la cantidad de<br>población, importancia y extensión urbana.
              <svg class="ibeam" viewBox="0 0 9 19"><path d="M1 1.500h2.500l1 1 1-1H8M4.500 2v15M1 17.500h2.500l1-1 1 1H8" fill="none" stroke="#fff" stroke-width="3"/><path d="M1.500 1.500h2l1 1 1-1h2M4.500 2v15M1.500 17.500h2l1-1 1 1h2" fill="none" stroke="#222"/></svg>
            </div>
            <div class="check"><i class="ck"></i><span>Representar como HTML</span></div>
            <div class="button">Insert or Edit an Expression...</div>
          </div>
          <div class="gt gt2 bold">Apariencia</div>
          <div class="group g-app">
            <div class="fontrow"><div class="button font"><em>Tipo de letra</em></div><div class="button drop"></div></div>
            <div class="frow colorrow"><span>Color de letras</span><div class="button color"><i></i></div><div class="button drop"></div></div>
            <div class="frow"><span>Margen horizontal</span><div class="spin"><span>0,00 mm</span><b></b></div></div>
          </div>
        </div>
        <div class="scroll"><i class="up"></i><b class="h2"></b><i class="down"></i></div>
      </div>
    </aside>
  </main>

  <footer class="status">
    <span class="sel">1 elemento seleccionado</span><span class="sx">x: 312.872 mm</span><span class="sy">y: 156.796 mm</span><span class="sp">página: 1</span>
    <div class="combo zoom"><span>73.4%</span><b></b></div>
    <svg class="slider" viewBox="0 0 118 20"><rect x=".5" y="7.500" width="97" height="4" rx="2" fill="#ddd" stroke="#aaa"/><rect x=".5" y="7.500" width="12" height="4" rx="2" fill="#6cc3f0" stroke="#3a8fc0"/><rect x="6.500" y="3.500" width="11" height="12" rx="3" fill="#fdfdfd" stroke="#999"/></svg>
    <i class="corner"></i>
  </footer>
</div>
<script src="script.js"></script>
</body>
</html>
```

FILE: styles.css
```css
* { box-sizing: border-box; }
html, body { margin: 0; height: 100%; overflow: hidden; background: #fff; }
body { padding: 53px 65px 0; font: 13px/18px "Noto Sans", "Open Sans", sans-serif; color: #31363b; }
.defs { position: absolute; }
.bold { font-weight: 700; color: #232629; letter-spacing: -.4px; }
.window { width: 1536px; height: 855px; display: flex; flex-direction: column; background: #eff0f1; border-radius: 4px 4px 0 0; box-shadow: 0 0 1px 1px rgba(70,70,70,.6), 0 13px 42px 2px rgba(0,0,0,.8); }
.titlebar { height: 29px; flex: none; display: flex; align-items: center; padding: 0 3px 0 4px; background: linear-gradient(#57626b, #475057); border-radius: 4px 4px 0 0; color: #fcfcfc; }
.logo { width: 20px; height: 20px; }
.shade { width: 12px; height: 12px; margin: 0 0 1px 8px; }
.caption { flex: 1; text-align: center; padding: 0 0 2px 49px; }
.winbtns { width: 90px; height: 20px; margin-bottom: 2px; }
.menu { height: 23px; flex: none; display: flex; gap: 14.700px; padding: 2px 0 0 10.200px; border-bottom: 1px solid #c8cacb; }
.menu u { text-underline-offset: 3px; text-decoration-thickness: 1px; }
.toolbar { flex: none; display: flex; align-items: center; padding-left: 4px; background: linear-gradient(#fafbfc, #edeeef); border-bottom: 1px solid #b4b6b8; }
.bar1 { height: 39px; }
.bar2 { height: 38px; }
.toolbar svg { width: 33px; height: 32px; flex: none; }
.off { opacity: .3; filter: grayscale(1); }
.grip { width: 5px; height: 18px; margin-right: 3.500px; flex: none; background: radial-gradient(circle, #b2b4b6 .7px, transparent .9px) 0 0 / 2.500px 3px; }
.bar2 .grip { margin-right: 2.500px; }
.bar1 .g2 { margin: 0 1.500px 0 8.500px; }
.bar2 .g3 { margin: 0 4px 0 8.500px; }
.sep { width: 1px; height: 19px; margin: 0 3px; background: #ccced0; flex: none; }
.one { font: bold 29px "Noto Sans", sans-serif; text-anchor: middle; fill: #333; letter-spacing: -2px; }
.nn { font: bold 23px "Noto Sans", sans-serif; text-anchor: middle; fill: #fff; }
.combo { display: flex; justify-content: space-between; border: 1px solid #a8aaac; border-radius: 3px; background: #fcfcfc; overflow: hidden; }
.combo b { background: linear-gradient(#fcfcfc, #ececec); border-left: 1px solid #b4b6b8; display: grid; place-items: center; }
.combo b::after, .dd::after, .drop::after { content: ""; border: 4px solid transparent; border-top: 4px solid #777; border-bottom: 0; }
.pagebox { width: 78px; height: 30px; margin: 0 .5px 0 0; background: #efefef; color: #a9a9a9; flex: none; }
.pagebox span { padding: 5px 4px; }
.pagebox b { width: 20px; }
.pagebox b::after { opacity: .55; }
.dd { width: 11px; display: grid; place-items: center; opacity: .6; }
.body { flex: 1; min-height: 0; display: flex; padding-top: 1px; }
.tools { width: 40px; flex: none; display: flex; flex-direction: column; align-items: center; background: linear-gradient(90deg, #fafbfc, #eff0f1); border-right: 1px solid #b4b6b8; }
.tools svg { width: 32px; height: 32px; flex: none; }
.tools svg.on { background: #d3d5d6; border-radius: 3px; box-shadow: inset 0 0 0 1px #b5b7b8; }
.hgrip { width: 17px; height: 5px; margin: 5px 0 1px; flex: none; background: radial-gradient(circle, #b2b4b6 .7px, transparent .9px) 0 0 / 3px 2.500px; }
.view { width: 941px; flex: none; display: flex; flex-direction: column; border-bottom: 1px solid #b4b6b8; }
.viewrow { display: flex; }
.hruler { width: 941px; height: 24px; }
.vruler { width: 24px; height: 669px; }
.hruler, .vruler, .canvas { display: block; flex: none; }
.canvas { width: 917px; height: 669px; background: #d7d7d7; }
#hticks, #vticks { stroke: #555; fill: none; shape-rendering: crispEdges; }
.hruler text, .vruler text { font-size: 10.900px; fill: #6a6d70; }
.vruler text { text-anchor: end; }
.mark { fill: #f55; }
.cur { stroke: #f00; shape-rendering: crispEdges; }
.big, .mid { font-size: 33px; fill: #222; stroke: #fffc; stroke-width: 5px; paint-order: stroke; }
.mid { font-size: 28px; fill: #333; }
.state { font-size: 28px; font-style: italic; fill: #89618a; stroke: #fffc; stroke-width: 5px; paint-order: stroke; }
.km { font-size: 35px; fill: #111; }
.pt { fill: none; stroke-linecap: round; }
.out { stroke: #26262a; stroke-width: 19.500px; }
.red { stroke: #db1650; stroke-width: 14px; }
.green { stroke: #5fca38; stroke-width: 14px; }
.legend { font-size: 12px; fill: #000; }
.ttl { font: italic 15px "DejaVu Serif Condensed", "DejaVu Serif", serif; text-anchor: middle; }
.sub { font: italic 9.500px "DejaVu Sans", sans-serif; text-anchor: middle; }
.src { font-size: 7.700px; fill: #111; }
.handles { fill: #fff; stroke: #3592cc; }
.guides { stroke: #f00; stroke-dasharray: 1 2; fill: none; shape-rendering: crispEdges; }
.dock { width: 555px; flex: none; padding-left: 6px; display: flex; flex-direction: column; background: #eff0f1; }
.tabs { height: 29px; flex: none; display: flex; align-items: flex-end; border-bottom: 1px solid #b9bbbc; }
.tab { height: 26px; padding: 4px 11px 0; background: #dcddde; border: 1px solid #b9bbbc; border-bottom: 0; border-radius: 3px 3px 0 0; margin-left: -1px; white-space: nowrap; }
.tab:first-child { margin-left: 0; }
.tab.on { height: 29px; margin-bottom: -1px; padding-top: 5px; background: linear-gradient(#fbfbfc, #eff0f1); }
.t1 .tab.on { width: 90px; }
.t1 .tab:last-child { width: 135px; }
.w1 { width: 69px; }
.w2 { width: 185px; }
.w3 { width: 59px; }
.docktitle { height: 21px; flex: none; display: flex; justify-content: space-between; padding: 2px 1px 0 4px; }
.docktitle svg { width: 26px; height: 12px; margin-top: 2px; }
.list { height: 166px; flex: none; display: flex; border: 1px solid #b4b6b8; background: #fcfcfc; margin-right: 1px; }
.rows { flex: 1; overflow: hidden; }
.row { height: 20px; display: flex; align-items: center; padding-left: 3px; }
.row > svg { width: 14px; height: 14px; margin-right: 7px; }
.row .ck + .ck { margin-right: 28px; }
.head { height: 21px; padding: 0; background: linear-gradient(#fdfdfd, #ebebeb); border-bottom: 1px solid #b4b6b8; align-items: stretch; }
.head span { border-right: 1px solid #ccc; display: flex; align-items: center; }
.c1 { width: 41px; padding-left: 2px; }
.c2 { width: 41px; padding-left: 4px; }
.head .c3 { border: 0; padding-left: 2px; }
.c1 svg { width: 16px; height: 12px; }
.c2 svg { width: 12px; height: 16px; }
.ck { width: 14px; height: 14px; flex: none; border: 1px solid #b4b6b8; background: #fcfcfc; position: relative; margin-right: 27px; }
.ck.on::after { content: ""; position: absolute; left: 4px; top: 1px; width: 4px; height: 7px; border: solid #111; border-width: 0 2px 2px 0; transform: rotate(38deg) skewY(10deg); }
.scroll { width: 14px; flex: none; display: flex; flex-direction: column; background: #e4e6e6; border-left: 1px solid #b9bbbc; }
.scroll i { height: 13px; flex: none; background: #fcfcfc; display: grid; place-items: center; }
.scroll i::after { content: ""; border: 3.500px solid transparent; border-bottom: 4px solid #777; border-top: 0; }
.scroll .down { border-top: 1px solid #b9bbbc; margin-top: auto; }
.scroll .down::after { border-top: 4px solid #777; border-bottom: 0; }
.scroll b { background: #fcfcfc; border: solid #b9bbbc; border-width: 1px 0; }
.h1 { height: 107px; }
.h2 { height: 138px; }
.split { height: 6px; flex: none; background: radial-gradient(circle, #b2b4b6 .7px, transparent .9px) 268px 1px / 3px 3px repeat-x; background-clip: content-box; padding: 0 264px 0 268px; }
.t2 .tab { padding-top: 4px; }
.label { height: 22px; flex: none; padding: 2px 5px; background: #c6c6c6; letter-spacing: -.4px; font-weight: 600; color: #333; }
.props { flex: 1; min-height: 0; display: flex; border: 1px solid #b9bbbc; margin-right: 1px; }
.form { flex: 1; min-width: 0; overflow: hidden; padding: 11px 10px 0 12px; }
.gt { height: 22px; padding-left: 21px; line-height: 20px; position: relative; }
.gt::before { content: ""; position: absolute; left: 2px; top: 7px; border: 5.500px solid transparent; border-top: 8px solid #35393c; border-bottom: 0; }
.gt2 { margin-top: 6px; }
.group { border: 1px solid #d6d8d9; border-radius: 2px; background: #ebecee; padding: 12px 12px; }
.g-main { height: 239px; }
.g-app { height: 140px; }
.textarea { height: 150px; border: 1px solid #b4b6b8; background: #fcfcfc; padding: 5px 4px; position: relative; white-space: nowrap; letter-spacing: -.01px; }
.ibeam { position: absolute; left: 144px; top: 132px; width: 9px; height: 19px; }
.check { display: flex; align-items: center; height: 18px; margin-top: 9px; }
.check .ck { margin-right: 5px; }
.button { border: 1px solid #adafb1; border-radius: 3px; background: linear-gradient(#fcfcfc, #eee); text-align: center; }
.check + .button { height: 27px; margin-top: 9px; line-height: 24px; }
.fontrow { display: flex; }
.font { flex: 1; height: 25px; text-align: left; padding: 3px 6px; color: #111; }
.drop { width: 12px; display: grid; place-items: center; }
.frow { display: flex; height: 28px; margin-top: 7px; align-items: center; }
.frow > span { width: 119px; flex: none; white-space: nowrap; }
.color { width: 108px; height: 28px; padding: 5px 4px; }
.color i { display: block; height: 16px; border-radius: 3px; background: #000; }
.colorrow { margin-top: 6px; }
.colorrow .drop { height: 28px; }
.spin { flex: 1; height: 28px; border: 1px solid #adafb1; border-radius: 3px; background: #fcfcfc; display: flex; justify-content: space-between; padding-left: 4px; line-height: 26px; }
.spin b { width: 14px; border-left: 1px solid #b4b6b8; display: flex; flex-direction: column; align-items: center; justify-content: space-evenly; }
.spin b::before { content: ""; border: 4px solid transparent; border-bottom: 4px solid #777; border-top: 0; }
.spin b::after { content: ""; border: 4px solid transparent; border-top: 4px solid #777; border-bottom: 0; }
.status { height: 31px; flex: none; display: flex; align-items: center; padding-left: 6px; }
.sel { flex: 1; }
.sx { width: 106px; }
.sy { width: 106px; }
.sp { width: 107px; }
.zoom { width: 243px; height: 26px; line-height: 24px; }
.zoom span { padding-left: 3px; }
.zoom b { width: 20px; }
.slider { width: 118px; height: 20px; margin: 0 5px 0 6px; }
.corner { width: 11px; height: 11px; margin-left: -11px; align-self: flex-end; background: radial-gradient(circle, #b2b4b6 .8px, transparent 1px) 0 0 / 3px 3px; clip-path: polygon(100% 0, 100% 100%, 0 100%); }
```

FILE: script.js
```js
const STEP = 2.771; // pixels per millimetre
const byId = (id) => document.getElementById(id);

// Ruler ticks every 5 mm, labels every 20 mm
function ruler(axis, origin, from, to) {
  let d = "", labels = "";
  for (let mm = -40; mm <= 320; mm += 5) {
    const p = origin + mm * STEP;
    if (p < from || p > to) continue;
    const q = Math.floor(p) + 0.5;
    const len = mm % 20 === 0 && mm >= 0 ? 24 : mm % 10 === 0 ? 8 : 5;
    d += axis === "h" ? `M${q} ${207 - len}v${len}` : `M${129 - len} ${q}h${len}`;
    if (len === 24) {
      labels += axis === "h"
        ? `<text x="${q + 1.5}" y="197">${mm}</text>`
        : `<text transform="translate(118.500 ${q + 3.5}) rotate(-90)">${mm}</text>`;
    }
  }
  byId(axis + "ticks").setAttribute("d", d);
  byId(axis + "labels").innerHTML = labels;
}
ruler("h", 175.4, 129, 1046);
ruler("v", 249.4, 207, 876);

// City points
const NO = [113,244,243,248,219,298,124,333,206,357,75,390,333,401,233,450,150,463,167,506,267,495,335,540,399,576,484,539,469,466,534,468,186,593,91,626,222,694,376,787,579,826,537,294,654,293,655,321,747,292,718,394,670,474,677,582,723,688,816,370,885,357,850,478,887,557,851,735,836,846,849,843,
905,475,1047,505,1020,553,1102,585,1044,644,1157,635,1269,717,1132,747,1344,748,909,740,1108,819,1288,846,
493,1149,698,1125,698,1121,738,1257,414,1304,524,1365,889,1410,894,1487,724,1521,124,1473,323,1614,225,1632,767,1650,752,1688,880,1628,873,952,
1360,880,1401,888,1368,924,1397,958,1420,944,1397,981,1275,980,1136,997,1209,1057,1375,1050,1194,1125,1293,1133,1187,1167,1199,1234,1130,1314,1088,1361,917,1323,962,1473,984,1113];
const SI = [218,244,407,573,944,401,1370,660,1416,829,1411,954,1307,1151,956,1578];
const dots = (a) => a.reduce((s, v, i) => s + (i % 2 ? ` ${v}h.01` : `M${v}`), "");
for (const [k, a] of [["no", NO], ["si", SI]]) {
  byId(k + "-out").setAttribute("d", dots(a));
  byId(k + "-in").setAttribute("d", dots(a));
}
```
